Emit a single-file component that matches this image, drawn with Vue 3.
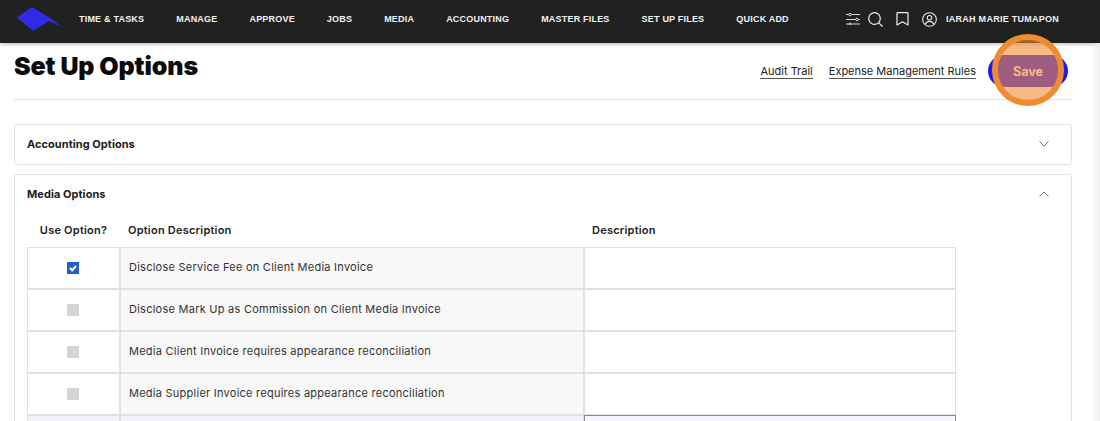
<template>
  <div class="page">
    <header class="topbar">
      <svg class="logo" width="46" height="24" viewBox="0 0 46 24">
        <path d="M0 10.500 L15 0 L33 11 L45.500 20 L32 14 L16 24 Z" fill="#2d2be4" />
      </svg>
      <nav class="nav">
        <a v-for="item in navItems" :key="item" class="nav__item">{{ item }}</a>
      </nav>
      <div class="tools">
        <svg class="tools__sliders" width="14" height="12" viewBox="0 0 14 12" fill="none" stroke="#d8d8d8" stroke-width="1">
          <path d="M0 1.500h14M0 6.500h14M0 11h14" />
          <circle cx="4" cy="1.500" r="1.300" fill="#212121" />
          <circle cx="11" cy="6.500" r="1.300" fill="#212121" />
          <circle cx="4" cy="11" r="0.900" fill="#212121" />
        </svg>
        <svg class="tools__search" width="15" height="15" viewBox="0 0 15 15" fill="none" stroke="#f0f0f0" stroke-width="1.200">
          <circle cx="6.500" cy="6.500" r="5.800" />
          <path d="M10.800 10.800 14.500 14.500" />
        </svg>
        <svg width="13" height="14" viewBox="0 0 13 14" fill="none" stroke="#f0f0f0" stroke-width="1.200">
          <path d="M1 1.200q0-.6.6-.6h9.800q.6 0 .6.6V13L6.500 9.800 1 13z" stroke-linejoin="round" />
        </svg>
        <svg width="15" height="15" viewBox="0 0 16 16" fill="none" stroke="#f0f0f0" stroke-width="1.100">
          <circle cx="8" cy="8" r="7.300" />
          <circle cx="8" cy="6.200" r="2.400" />
          <path d="M3.600 13c.8-2.200 2.400-3 4.400-3s3.600.8 4.400 3" />
        </svg>
        <span class="user">IARAH MARIE TUMAPON</span>
      </div>
    </header>

    <main class="content">
      <div class="title-row">
        <h1 class="title">Set Up Options</h1>
        <div class="actions">
          <a class="link">Audit Trail</a>
          <a class="link">Expense Management Rules</a>
          <button class="save">Save</button>
        </div>
      </div>

      <section class="card card--closed">
        <div class="card__head">
          <span>Accounting Options</span>
          <svg width="10" height="6" viewBox="0 0 10 6" fill="none" stroke="#777" stroke-width="1"><path d="M.5.5 5 5 9.500.5" /></svg>
        </div>
      </section>

      <section class="card">
        <div class="card__head">
          <span>Media Options</span>
          <svg width="10" height="6" viewBox="0 0 10 6" fill="none" stroke="#777" stroke-width="1"><path d="M.5 5.500 5 1l4.500 4.500" /></svg>
        </div>
        <div class="grid">
          <div class="grid__th grid__th--center">Use Option?</div>
          <div class="grid__th">Option Description</div>
          <div class="grid__th">Description</div>
          <template v-for="row in rows" :key="row.label">
            <div class="cell cell--check"><span class="check" :class="{ 'check--on': row.on }">
              <svg v-if="row.on" width="12" height="12" viewBox="0 0 12 12" fill="none" stroke="#fff" stroke-width="2"><path d="M3 6l2.200 2.200L9 4" /></svg>
            </span></div>
            <div class="cell cell--label">{{ row.label }}</div>
            <div class="cell"></div>
          </template>
          <div class="cell cell--sel"></div>
          <div class="cell cell--sel"></div>
          <div class="cell cell--active"></div>
        </div>
      </section>
    </main>

    <div class="spot"></div>
    <div class="edge"></div>
  </div>
</template>

<script setup>
const navItems = ['TIME & TASKS', 'MANAGE', 'APPROVE', 'JOBS', 'MEDIA', 'ACCOUNTING', 'MASTER FILES', 'SET UP FILES', 'QUICK ADD']

const rows = [
  { label: 'Disclose Service Fee on Client Media Invoice', on: true },
  { label: 'Disclose Mark Up as Commission on Client Media Invoice', on: false },
  { label: 'Media Client Invoice requires appearance reconciliation', on: false },
  { label: 'Media Supplier Invoice requires appearance reconciliation', on: false },
]
</script>

<style>
html, body {
  margin: 0;
  height: 421px;
  overflow: hidden;
  background: #fff;
}
</style>

<style scoped>
.page {
  position: relative;
  height: 421px;
  overflow: hidden;
  font-family: Inter, "Liberation Sans", sans-serif;
  color: #222;
}

.topbar {
  position: relative;
  display: flex;
  align-items: center;
  height: 43px;
  padding: 0 0 5px 17px;
  background: #212121;
  box-shadow: 0 1px 4px rgba(0, 0, 0, 0.3);
  box-sizing: border-box;
}

.logo {
  flex-shrink: 0;
}

.nav {
  display: flex;
  gap: 32px;
  margin-left: 16px;
}

.nav__item {
  color: #f2f2f2;
  font-family: "Liberation Sans", sans-serif;
  font-size: 9px;
  font-weight: 700;
  letter-spacing: 0.2px;
  white-space: nowrap;
}

.tools {
  display: flex;
  align-items: center;
  gap: 13px;
  margin-left: auto;
  padding-right: 41px;
}

.tools__search {
  margin-left: -5px;
}

.user {
  margin-left: -4px;
  color: #f2f2f2;
  font-family: "Liberation Sans", sans-serif;
  font-size: 9px;
  font-weight: 700;
  letter-spacing: 0.26px;
}

.content {
  padding: 0 28px 0 14px;
}

.title-row {
  display: flex;
  align-items: center;
  justify-content: space-between;
  height: 56px;
  border-bottom: 1px solid #e3e3e3;
  margin-bottom: 24px;
}

.title {
  margin: 0 0 10px;
  font-size: 25px;
  font-weight: 900;
  letter-spacing: -0.1px;
  color: #0b0b0b;
}

.actions {
  display: flex;
  align-items: center;
  gap: 16px;
  padding-right: 4px;
}

.link {
  font-size: 11px;
  color: #222;
  border-bottom: 1px solid #555;
}

.save {
  width: 80px;
  height: 32px;
  margin-left: -4px;
  border: 0;
  border-radius: 16px;
  background: #2416f5;
  color: #fff;
  font-family: inherit;
  font-size: 12.500px;
  font-weight: 700;
}

.card {
  border: 1px solid #e3e3e3;
  border-radius: 3px;
  margin-bottom: 9px;
  padding: 0 12px;
}

.card__head {
  display: flex;
  align-items: center;
  justify-content: space-between;
  height: 39px;
  padding: 0 10px 1px 0;
  box-sizing: border-box;
  font-size: 11px;
  font-weight: 700;
  letter-spacing: 0.05px;
  color: #1c1c1c;
}

.grid {
  display: grid;
  grid-template-columns: 93px 464px 372px;
  grid-template-rows: 33px;
  grid-auto-rows: 42px;
  width: 929px;
}

.grid__th {
  display: flex;
  align-items: center;
  padding: 0 0 2px 8px;
  font-size: 11px;
  font-weight: 600;
  letter-spacing: 0.22px;
}

.grid__th--center {
  justify-content: center;
  padding-left: 0;
}

.cell {
  box-sizing: border-box;
  display: flex;
  align-items: center;
  border: 1px solid #e0e0e0;
}

.cell--check {
  justify-content: center;
  padding-right: 1px;
}

.cell--label {
  padding: 0 0 2px 8px;
  background: #f8f8f8;
  font-size: 11px;
  letter-spacing: 0.25px;
  color: #333;
}

.check {
  display: flex;
  align-items: center;
  justify-content: center;
  width: 12px;
  height: 12px;
  background: #d4d4d4;
}

.check--on {
  background: #1f62c9;
}

.cell--sel {
  background: #f3f2fb;
}

.cell--active {
  border-color: #8a8a99;
  background: #f6f4fd;
}

.spot {
  position: absolute;
  left: 992px;
  top: 34px;
  width: 72px;
  height: 72px;
  box-sizing: border-box;
  border: 6px solid #ee8c32;
  border-radius: 50%;
  background: rgba(238, 140, 50, 0.6);
}

.edge {
  position: absolute;
  top: 43px;
  right: 0;
  bottom: 0;
  width: 9px;
  background: linear-gradient(to right, rgba(238, 238, 238, 0), #efefef);
}
</style>
